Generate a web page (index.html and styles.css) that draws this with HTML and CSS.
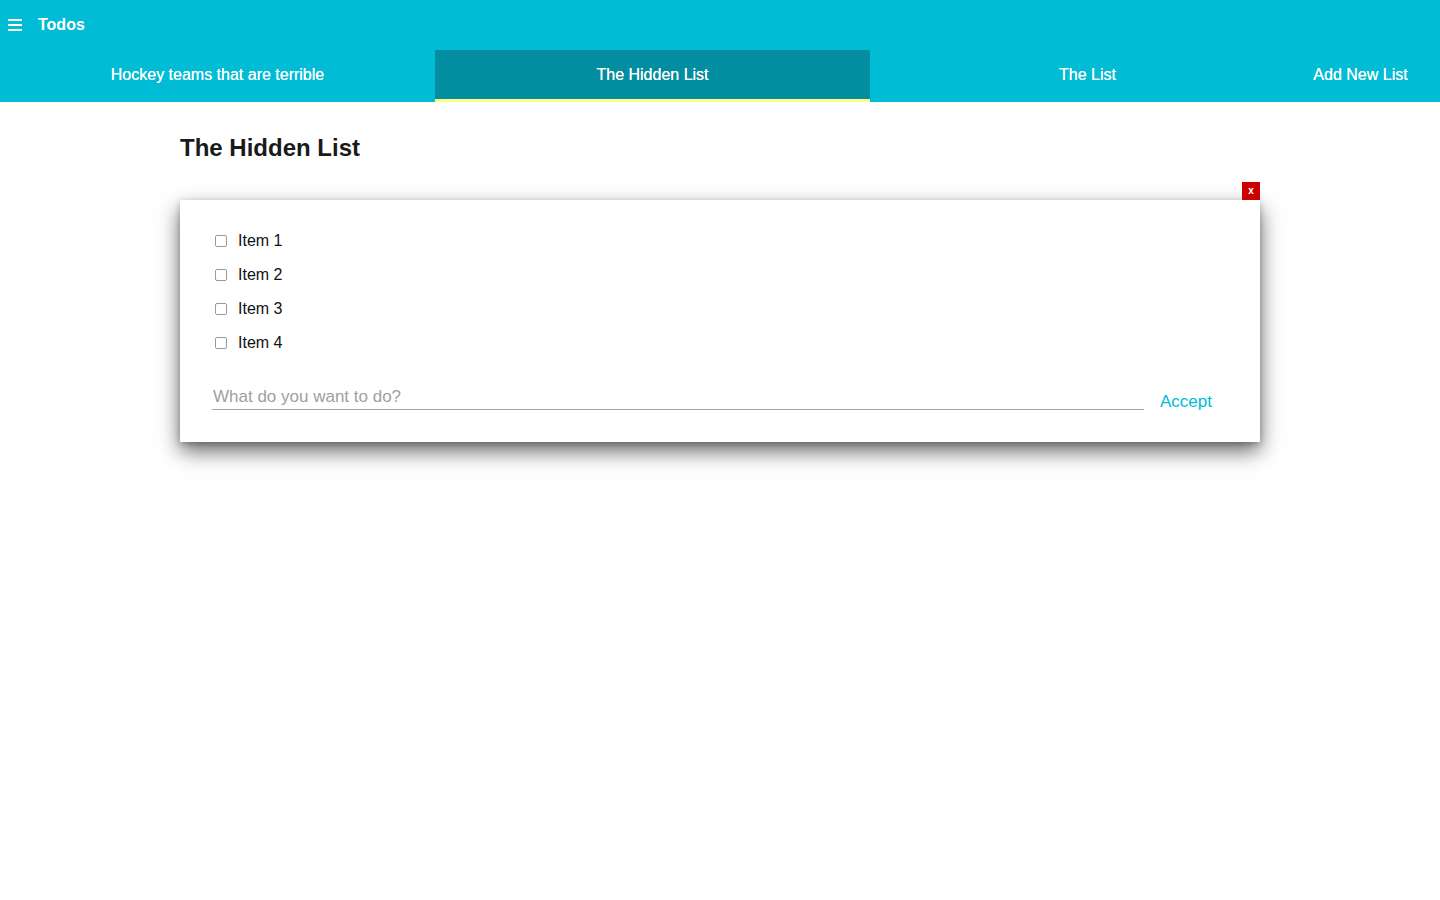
FILE: index.html
```html
<!DOCTYPE html>
<html>
<head>
<meta charset="utf-8">
<title>Todos</title>
<link rel="stylesheet" href="styles.css">
</head>
<body>
<header class="appbar">
  <div class="topbar">
    <span class="menu-icon"><span></span><span></span><span></span></span>
    <span class="app-title">Todos</span>
  </div>
  <nav class="tabs">
    <div class="tab">Hockey teams that are terrible</div>
    <div class="tab active">The Hidden List</div>
    <div class="tab">The List</div>
    <div class="add-list">Add New List</div>
  </nav>
</header>
<main class="content">
  <h1 class="list-title">The Hidden List</h1>
  <section class="card">
    <button class="close-btn">x</button>
    <ul class="items">
      <li class="item"><input type="checkbox" class="check"><span>Item 1</span></li>
      <li class="item"><input type="checkbox" class="check"><span>Item 2</span></li>
      <li class="item"><input type="checkbox" class="check"><span>Item 3</span></li>
      <li class="item"><input type="checkbox" class="check"><span>Item 4</span></li>
    </ul>
    <form class="new-item">
      <input type="text" class="todo-input" placeholder="What do you want to do?">
      <button type="button" class="accept">Accept</button>
    </form>
  </section>
</main>
</body>
</html>
```
FILE: styles.css
```css
* { box-sizing: border-box; }
html, body { margin: 0; padding: 0; background: #fff; }
body { font-family: "Liberation Sans", Arial, sans-serif; color: #111; min-height: 900px; }

.appbar { background: #00bcd4; color: #fff; }
.topbar { height: 50px; display: flex; align-items: center; padding-left: 8px; }
.menu-icon { width: 14px; display: flex; flex-direction: column; gap: 3px; margin-right: 16px; margin-top: -1px; }
.menu-icon span { display: block; height: 2px; background: #fff; }
.app-title { font-weight: bold; font-size: 16px; }

.tabs { display: flex; height: 52px; }
.tab { width: 435px; display: flex; align-items: center; justify-content: center; font-size: 16px; border-bottom: 3px solid transparent; padding-top: 1px; text-shadow: 0 0 0.4px #fff; }
.tab.active { background: #028da0; border-bottom-color: #ffff80; }
.add-list { flex: 1; display: flex; align-items: center; justify-content: center; font-size: 16px; padding: 0 24px 2px 0; text-shadow: 0 0 0.4px #fff; }

.content { width: 1080px; margin: 0 auto; padding-bottom: 40px; }
.list-title { font-size: 24px; font-weight: bold; margin: 0; padding-top: 32px; height: 98px; color: #1a1a1a; }

.card { position: relative; background: #fff; padding: 24px 32px 32px; box-shadow: 0 9px 20px rgba(0,0,0,0.6), 0 2px 6px rgba(0,0,0,0.2); }
.close-btn { position: absolute; top: -18px; right: 0; width: 18px; height: 18px; border: 0; padding: 0; background: #cc0000; color: #fff; font-family: "Liberation Sans", Arial, sans-serif; font-size: 10px; font-weight: bold; line-height: 18px; text-align: center; }

.items { list-style: none; margin: 0; padding: 0; }
.item { height: 34px; display: flex; align-items: center; font-size: 16px; }
.check { width: 12px; height: 12px; margin: 0 11px 0 3px; border: 1px solid #999; border-radius: 2px; appearance: none; -webkit-appearance: none; background: #fff; }

.new-item { display: flex; align-items: flex-start; margin: 23px 0 0; }
.todo-input { flex: 1; height: 27px; border: 0; border-bottom: 1px solid #a5a5a5; padding: 2px 1px 0; font-family: "Liberation Sans", Arial, sans-serif; font-size: 17px; outline: none; }
.todo-input::placeholder { color: #a0a0a0; }
.accept { border: 0; background: none; color: #00bcd4; font-family: "Liberation Sans", Arial, sans-serif; font-size: 17px; line-height: 17px; padding: 10px 16px 0; }
```
